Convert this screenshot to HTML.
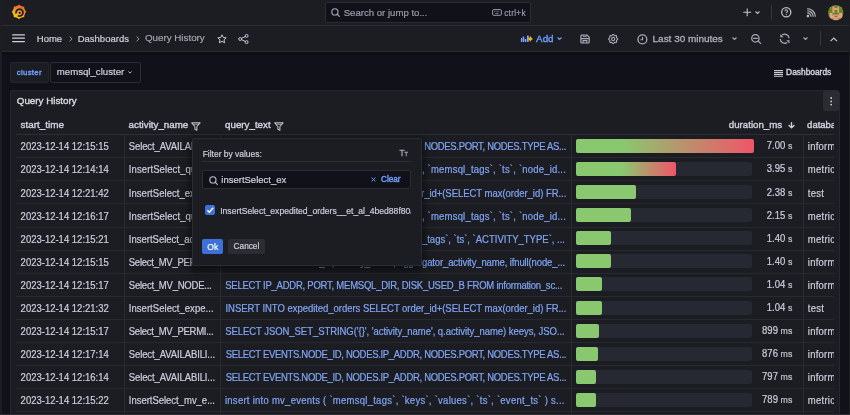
<!DOCTYPE html>
<html><head><meta charset="utf-8">
<style>
*{box-sizing:border-box;margin:0;padding:0}
html,body{-webkit-text-stroke:0.2px;width:850px;height:415px;overflow:hidden;background:#111219;-webkit-font-smoothing:antialiased;will-change:transform;font-family:"Liberation Sans",sans-serif;color:#ccccdc;font-size:9.5px}
.a{position:absolute}
.t{position:absolute;white-space:nowrap;line-height:1}
svg{position:absolute;overflow:visible}
#top{left:0;top:0;width:850px;height:26px;background:#1b1d22;border-bottom:1px solid #2a2d33}
#bc{left:0;top:26px;width:850px;height:26px;background:#1b1d22;border-bottom:1px solid #2a2c31}
.row{position:absolute;left:0;width:850px;height:23.1px}
.row span{position:absolute;top:0;line-height:23.1px;white-space:nowrap;transform:translateY(0.3px) scaleY(1.06);transform-origin:50% 50%}
.c1{left:20.6px;color:#ccccdc}
.c2{left:128.8px;color:#ccccdc}
.c3{color:#80a4f3}
.c5{left:807.8px;width:25.8px;overflow:hidden;color:#ccccdc;letter-spacing:0.25px}
.dur small{font-size:8.8px;color:#c0c0cc}
.dur{right:57.7px;color:#ccccdc}
.bg{position:absolute;left:575.7px;top:4.5px;width:176.4px;height:14px;background:#262931;border-radius:2px}
.bar{position:absolute;left:575.7px;top:4.5px;height:14px;background:#89c86f;border-radius:2px}
.hl{position:absolute;left:16px;width:817.6px;height:1px}
.vl{position:absolute;top:134.3px;width:1px;height:290px;background:#282a30}
</style></head>
<body>
<!-- left strip -->
<div class="a" style="left:848.8px;top:0;width:1.2px;height:415px;background:#1c1e23;z-index:5"></div>
<div class="a" style="left:0;top:413.5px;width:850px;height:1.5px;background:#2a2c31;z-index:6"></div>
<div class="a" style="left:0;top:0;width:2px;height:415px;background:#1c1e23;z-index:5"></div>

<!-- TOP BAR -->
<div id="top" class="a">
  <!-- grafana logo -->
  <svg style="left:11.3px;top:4.1px" width="16" height="16" viewBox="0 0 16 16">
    <defs><linearGradient id="lg" x1="0.75" y1="0" x2="0.25" y2="1"><stop offset="0" stop-color="#ec5e26"/><stop offset="0.45" stop-color="#f08a2a"/><stop offset="0.7" stop-color="#f6b41a"/><stop offset="1" stop-color="#fbd20a"/></linearGradient></defs>
    <path fill="url(#lg)" d="M15.20 7.85 L15.02 8.31 L14.59 8.72 L14.23 9.09 L14.13 9.49 L14.01 9.89 L13.87 10.28 L13.70 10.66 L13.50 11.02 L13.28 11.38 L13.28 11.90 L13.29 12.49 L13.09 12.94 L12.64 13.14 L12.05 13.13 L11.53 13.13 L11.18 13.35 L10.81 13.55 L10.43 13.72 L10.04 13.86 L9.64 13.98 L9.24 14.08 L8.87 14.44 L8.46 14.87 L8.00 15.05 L7.54 14.87 L7.13 14.44 L6.76 14.08 L6.36 13.98 L5.96 13.86 L5.57 13.72 L5.19 13.55 L4.83 13.35 L4.47 13.13 L3.95 13.13 L3.36 13.14 L2.91 12.94 L2.71 12.49 L2.72 11.90 L2.72 11.38 L2.50 11.02 L2.30 10.66 L2.13 10.28 L1.99 9.89 L1.87 9.49 L1.77 9.09 L1.41 8.72 L0.98 8.31 L0.80 7.85 L0.98 7.39 L1.41 6.98 L1.77 6.61 L1.87 6.21 L1.99 5.81 L2.13 5.42 L2.30 5.04 L2.50 4.68 L2.72 4.32 L2.72 3.80 L2.71 3.21 L2.91 2.76 L3.36 2.56 L3.95 2.57 L4.47 2.57 L4.82 2.35 L5.19 2.15 L5.57 1.98 L5.96 1.84 L6.36 1.72 L6.76 1.62 L7.13 1.26 L7.54 0.83 L8.00 0.65 L8.46 0.83 L8.87 1.26 L9.24 1.62 L9.64 1.72 L10.04 1.84 L10.43 1.98 L10.81 2.15 L11.18 2.35 L11.53 2.57 L12.05 2.57 L12.64 2.56 L13.09 2.76 L13.29 3.21 L13.28 3.80 L13.28 4.32 L13.50 4.67 L13.70 5.04 L13.87 5.42 L14.01 5.81 L14.13 6.21 L14.23 6.61 L14.59 6.98 L15.02 7.39Z"/>
    <path fill="none" stroke="#1a1c20" stroke-width="1.7" d="M5.12 9.51 A3.5 3.5 0 1 1 6.75 11.63"/>
    <circle cx="8.7" cy="8.8" r="1.15" fill="#1a1c20"/>
  </svg>
  <!-- search box -->
  <div class="a" style="left:325px;top:2px;width:206px;height:21px;background:#111219;border:1px solid #2a2d33;border-radius:2px"></div>
  <svg style="left:331px;top:8px" width="9" height="9" viewBox="0 0 9 9"><circle cx="3.9" cy="3.9" r="3.1" fill="none" stroke="#a9a9b8" stroke-width="1.1"/><path d="M6.2 6.2 L8.3 8.3" stroke="#a9a9b8" stroke-width="1.2" stroke-linecap="round"/></svg>
  <div class="t" style="left:343.7px;top:7.5px;color:#9a9aa8;font-size:9.6px">Search or jump to...</div>
  <svg style="left:491.6px;top:9.4px" width="10" height="7" viewBox="0 0 10 7"><rect x="0.6" y="0.6" width="8.8" height="5.7" rx="1.1" fill="none" stroke="#9a9aa8" stroke-width="1"/><path d="M2.2 2.4 H7.8" stroke="#8a8a98" stroke-width="0.8" stroke-dasharray="0.8 0.6"/><path d="M3.4 4.3 H6.6" stroke="#9a9aa8" stroke-width="0.8"/></svg>
  <div class="t" style="left:504.2px;top:9.6px;color:#9a9aa8;font-size:8.2px;letter-spacing:0.3px">ctrl+k</div>
  <!-- plus -->
  <svg style="left:742.6px;top:8px" width="9" height="9" viewBox="0 0 9 9"><path d="M4.2 0.4 V8.2 M0.3 4.3 H8.1" stroke="#c7c7d3" stroke-width="1.05"/></svg>
  <svg style="left:755.3px;top:11.2px" width="5" height="3" viewBox="0 0 5 3"><path d="M0.5 0.5 L2.5 2.5 L4.5 0.5" fill="none" stroke="#b8b8c4" stroke-width="1.1"/></svg>
  <div class="a" style="left:771px;top:5px;width:1px;height:15px;background:#34363c"></div>
  <!-- help -->
  <svg style="left:780.6px;top:6.7px" width="10.5" height="10.5" viewBox="0 0 10 10"><circle cx="5" cy="5" r="4.35" fill="none" stroke="#bdbdc9" stroke-width="1.25"/><path d="M3.8 4 A1.25 1.25 0 1 1 5.4 5.2 C5.05 5.4 5 5.6 5 6" fill="none" stroke="#a9a9b6" stroke-width="1.1"/><circle cx="5" cy="7.3" r="0.6" fill="#a9a9b6"/></svg>
  <!-- rss -->
  <svg style="left:806px;top:7.6px" width="10" height="10" viewBox="0 0 10 10"><circle cx="1.9" cy="8.1" r="1.3" fill="#bdbdc9"/><path d="M1.2 4.9 A3.9 3.9 0 0 1 5.1 8.8 M1.2 2.7 A6.1 6.1 0 0 1 7.3 8.8 M1.2 0.6 A8.2 8.2 0 0 1 9.4 8.8" fill="none" stroke="#b4b4c0" stroke-width="1.15"/></svg>
  <!-- avatar -->
  <svg style="left:827.5px;top:4.6px" width="15.6" height="15.6" viewBox="0 0 16 16">
    <defs><clipPath id="av"><circle cx="8" cy="8" r="7.9"/></clipPath></defs>
    <g clip-path="url(#av)"><rect width="16" height="16" fill="#5e8a1c"/>
    <g fill="#ee9a8c">
    <rect x="4.55" y="1.6" width="2.15" height="6.5"/><rect x="9.7" y="1.6" width="1.65" height="6.5"/><rect x="6.7" y="3.0" width="3" height="2.1"/>
    <rect x="1.5" y="8.1" width="3.05" height="5.2"/><rect x="11.35" y="8.1" width="3.25" height="5.2"/>
    <rect x="4.55" y="9.8" width="6.8" height="1.3"/>
    <rect x="2.9" y="11.1" width="10.1" height="2.7"/>
    <rect x="5.6" y="13.8" width="4.9" height="1.7"/>
    <rect x="1.5" y="2.4" width="1.4" height="1.1"/><rect x="13" y="2.4" width="1.4" height="1.1"/>
    </g>
    <rect x="6.7" y="11.1" width="3" height="1.3" fill="#5e8a1c"/></g>
  </svg>
</div>

<!-- BREADCRUMB BAR -->
<div id="bc" class="a">
  <svg style="left:11.7px;top:8.3px" width="14" height="9" viewBox="0 0 14 9"><path d="M0.7 0.9 H12.4 M0.7 4.2 H12.4 M0.7 7.6 H12.4" stroke="#d0d0dc" stroke-width="1.3" stroke-linecap="round"/></svg>
  <div class="t" style="left:36.8px;top:7.8px;color:#cfcfdb">Home</div>
  <svg style="left:68.5px;top:9.8px" width="4" height="6" viewBox="0 0 4 6"><path d="M0.6 0.5 L3 2.9 L0.6 5.3" fill="none" stroke="#a9a9b6" stroke-width="0.9"/></svg>
  <div class="t" style="left:77.7px;top:7.8px;color:#cfcfdb">Dashboards</div>
  <svg style="left:136px;top:9.8px" width="4" height="6" viewBox="0 0 4 6"><path d="M0.6 0.5 L3 2.9 L0.6 5.3" fill="none" stroke="#a9a9b6" stroke-width="0.9"/></svg>
  <div class="t" style="left:144.9px;top:7px;color:#a3a3b0;font-size:9.8px">Query History</div>
  <!-- star -->
  <svg style="left:216.8px;top:8.3px" width="10" height="10" viewBox="0 0 10 10"><path d="M5 0.8 L6.25 3.5 L9.2 3.8 L7 5.8 L7.6 8.8 L5 7.3 L2.4 8.8 L3 5.8 L0.8 3.8 L3.75 3.5 Z" fill="none" stroke="#cfcfdb" stroke-width="0.95" stroke-linejoin="round"/></svg>
  <!-- share -->
  <svg style="left:238.2px;top:8px" width="11" height="10" viewBox="0 0 11 10"><circle cx="8.6" cy="1.9" r="1.45" fill="none" stroke="#cfcfdb" stroke-width="0.95"/><circle cx="2.2" cy="5" r="1.45" fill="none" stroke="#cfcfdb" stroke-width="0.95"/><circle cx="8.6" cy="8.1" r="1.45" fill="none" stroke="#cfcfdb" stroke-width="0.95"/><path d="M3.5 4.3 L7.3 2.6 M3.5 5.7 L7.3 7.4" stroke="#cfcfdb" stroke-width="0.95"/></svg>

  <!-- add icon -->
  <svg style="left:520px;top:9px" width="15" height="8" viewBox="0 0 15 8"><g fill="#7ea6ff"><rect x="0.9" y="2.9" width="1.4" height="4" rx="0.3"/><rect x="2.7" y="1.4" width="1.5" height="5.5" rx="0.3"/><rect x="4.7" y="4.1" width="1.6" height="2.8" rx="0.3"/><rect x="6.9" y="0.4" width="1.9" height="6.5" rx="0.4"/></g><path fill="#f5b800" d="M10.4 1.1 Q11.1 3.2 13 3.9 Q11.1 4.6 10.4 6.8 Q9.7 4.6 7.8 3.9 Q9.7 3.2 10.4 1.1Z"/></svg>
  <div class="t" style="left:536.1px;top:7.6px;color:#6e9fff;font-size:9.8px;-webkit-text-stroke:0.35px">Add</div>
  <svg style="left:557.2px;top:11.2px" width="5" height="3" viewBox="0 0 5 3"><path d="M0.5 0.5 L2.5 2.5 L4.5 0.5" fill="none" stroke="#6e9fff" stroke-width="1.1"/></svg>
  <!-- save -->
  <svg style="left:580px;top:7.6px" width="10" height="10" viewBox="0 0 10 10"><path d="M1.9 1 H7 L9.2 3.2 V8 Q9.2 9 8.2 9 H1.9 Q0.9 9 0.9 8 V2 Q0.9 1 1.9 1 Z" fill="none" stroke="#a9a9b6" stroke-width="1.2"/><path d="M1 4.6 H9.1 M3.1 9 V6.6 H6.9 V9" fill="none" stroke="#a9a9b6" stroke-width="1.1"/><path d="M3.2 1 V2.6 H6.4 V1" fill="none" stroke="#a9a9b6" stroke-width="0.9"/></svg>
  <!-- gear -->
  <svg style="left:607.9px;top:33.9px;top:7.9px" width="10.4" height="10" viewBox="0 0 10.4 10"><path d="M9.80 5.00 L9.63 5.44 L9.22 5.80 L8.79 6.09 L8.53 6.38 L8.50 6.77 L8.61 7.28 L8.64 7.83 L8.45 8.25 L8.03 8.44 L7.48 8.41 L6.97 8.30 L6.58 8.33 L6.29 8.59 L6.00 9.02 L5.64 9.43 L5.20 9.60 L4.76 9.43 L4.40 9.02 L4.11 8.59 L3.82 8.33 L3.43 8.30 L2.92 8.41 L2.37 8.44 L1.95 8.25 L1.76 7.83 L1.79 7.28 L1.90 6.77 L1.87 6.38 L1.61 6.09 L1.18 5.80 L0.77 5.44 L0.60 5.00 L0.77 4.56 L1.18 4.20 L1.61 3.91 L1.87 3.62 L1.90 3.23 L1.79 2.72 L1.76 2.17 L1.95 1.75 L2.37 1.56 L2.92 1.59 L3.43 1.70 L3.82 1.67 L4.11 1.41 L4.40 0.98 L4.76 0.57 L5.20 0.40 L5.64 0.57 L6.00 0.98 L6.29 1.41 L6.58 1.67 L6.97 1.70 L7.48 1.59 L8.03 1.56 L8.45 1.75 L8.64 2.17 L8.61 2.72 L8.50 3.23 L8.53 3.62 L8.79 3.91 L9.22 4.20 L9.63 4.56Z" fill="none" stroke="#a9a9b6" stroke-width="1.1" stroke-linejoin="round"/><circle cx="5.2" cy="5" r="1.6" fill="none" stroke="#a9a9b6" stroke-width="1.1"/></svg>
  <!-- clock -->
  <svg style="left:636.5px;top:7.5px" width="11" height="11" viewBox="0 0 11 11"><circle cx="5.4" cy="5.4" r="4.45" fill="none" stroke="#a9a9b6" stroke-width="1.3"/><path d="M5.5 3 V5.7 H3.4" fill="none" stroke="#a9a9b6" stroke-width="1.15"/></svg>
  <div class="t" style="left:652.6px;top:7.7px;color:#b0b0bc;font-size:9.95px;-webkit-text-stroke:0.3px">Last 30 minutes</div>
  <svg style="left:732.3px;top:11.2px" width="5" height="3" viewBox="0 0 5 3"><path d="M0.5 0.5 L2.5 2.5 L4.5 0.5" fill="none" stroke="#a9a9b6" stroke-width="1.1"/></svg>
  <!-- zoom out -->
  <svg style="left:751px;top:8.2px" width="11" height="10" viewBox="0 0 11 10"><circle cx="4.4" cy="4.3" r="3.7" fill="none" stroke="#a9a9b6" stroke-width="1.25"/><path d="M2.5 4.3 H6.3 M7.1 7 L9.6 9.4" stroke="#a9a9b6" stroke-width="1.25" stroke-linecap="round"/></svg>
  <!-- refresh -->
  <svg style="left:779.1px;top:7.4px" width="12" height="12" viewBox="0 0 12 12"><path d="M3.12 2.01 A4.5 4.5 0 0 1 10.18 5.31 M8.28 9.39 A4.5 4.5 0 0 1 1.22 6.09" fill="none" stroke="#a9a9b6" stroke-width="1.25"/><path d="M1.3 1.0 L1.3 4.3 L4.5 4.3 Z M10.5 10.6 L10.5 7.3 L7.3 7.3 Z" fill="#a9a9b6"/></svg>
  <svg style="left:803.4px;top:11px" width="5" height="3" viewBox="0 0 5 3"><path d="M0.5 0.5 L2.5 2.5 L4.5 0.5" fill="none" stroke="#a9a9b6" stroke-width="1.1"/></svg>
  <div class="a" style="left:820.3px;top:4.5px;width:1px;height:15.5px;background:#34363c"></div>
  <svg style="left:830.2px;top:11.3px" width="8" height="5" viewBox="0 0 8 5"><path d="M0.6 4.2 L3.8 1 L7 4.2" fill="none" stroke="#c7c7d3" stroke-width="1.1"/></svg>
</div>

<div class="a" style="left:0;top:52px;width:850px;height:2.5px;background:linear-gradient(#0a0b0f,rgba(10,11,15,0))"></div>
<!-- VARIABLES -->
<div class="a" style="left:10.2px;top:61.8px;width:38.4px;height:20.8px;background:#1b1d22;border:1px solid #24262b;border-radius:2px"></div>
<div class="t" style="left:16.8px;top:69.2px;color:#6e9fff;font-size:7.8px;letter-spacing:0.3px;-webkit-text-stroke:0.4px">cluster</div>
<div class="a" style="left:50.4px;top:61.8px;width:90.2px;height:20.8px;background:#111219;border:1px solid #2a2d33;border-radius:2px"></div>
<div class="t" style="left:56.8px;top:67.4px;color:#cfcfdb;font-size:9.65px">memsql_cluster</div>
<svg style="left:128.4px;top:71.2px" width="4" height="3" viewBox="0 0 4 3"><path d="M0.4 0.5 L2 2.1 L3.6 0.5" fill="none" stroke="#cfcfdb" stroke-width="0.9"/></svg>

<svg style="left:773.8px;top:69.6px" width="9" height="7" viewBox="0 0 9 7"><path d="M0 0.6 H9 M0 2.5 H9 M0 4.4 H9 M0 6.3 H9" stroke="#c7c7d3" stroke-width="1.1"/></svg>
<div class="t" style="left:786.1px;top:68px;color:#d0d0dc;font-size:8.4px;-webkit-text-stroke:0.4px">Dashboards</div>

<!-- PANEL -->
<div class="a" style="left:10px;top:90px;width:830px;height:330px;background:#1b1d22;border:1px solid #26282d;border-radius:3px"></div>
<div class="t" style="-webkit-text-stroke:0.4px;left:16.8px;top:96.3px;color:#d8d8e2;font-size:9.8px">Query History</div>
<div class="a" style="left:823.4px;top:91px;width:15.5px;height:19.6px;background:#2a2c31;border-radius:2px"></div>
<svg style="left:829.8px;top:96.6px" width="2.4" height="9" viewBox="0 0 2.4 9"><circle cx="1.2" cy="1" r="0.9" fill="#cfcfdb"/><circle cx="1.2" cy="4.4" r="0.9" fill="#cfcfdb"/><circle cx="1.2" cy="7.6" r="0.9" fill="#cfcfdb"/></svg>

<!-- TABLE HEADER -->
<div class="a" style="left:16px;top:133.8px;width:818px;height:1px;background:#2a2d33"></div>
<div class="t" style="-webkit-text-stroke:0.4px;left:20.6px;top:120.1px;color:#d0d0dc;font-size:9.9px">start_time</div>
<div class="t" style="-webkit-text-stroke:0.4px;left:128.6px;top:120.1px;color:#d0d0dc;font-size:9.75px">activity_name</div>
<svg style="left:191.4px;top:122.3px" width="10" height="9" viewBox="0 0 10 9"><path d="M0.7 0.8 H9.1 L5.9 4.5 V8.3 L3.9 7.2 V4.5 Z" fill="none" stroke="#c0c0cc" stroke-width="1.05" stroke-linejoin="round"/><path d="M1.9 2.2 H7.9" stroke="#c0c0cc" stroke-width="0.9"/></svg>
<div class="t" style="-webkit-text-stroke:0.4px;left:225.1px;top:120.1px;color:#d0d0dc;font-size:9.75px">query_text</div>
<svg style="left:274.2px;top:122.3px" width="10" height="9" viewBox="0 0 10 9"><path d="M0.7 0.8 H9.1 L5.9 4.5 V8.3 L3.9 7.2 V4.5 Z" fill="none" stroke="#c0c0cc" stroke-width="1.05" stroke-linejoin="round"/><path d="M1.9 2.2 H7.9" stroke="#c0c0cc" stroke-width="0.9"/></svg>
<div class="t" style="-webkit-text-stroke:0.4px;left:728.8px;top:120.2px;color:#d0d0dc;font-size:9.7px">duration_ms</div>
<svg style="left:787.6px;top:121.8px" width="7" height="7" viewBox="0 0 7 7"><path d="M3.5 0.6 V5.6 M1.0 3.4 L3.5 5.8 L6.0 3.4" fill="none" stroke="#d0d0dc" stroke-width="1.4" stroke-linecap="round" stroke-linejoin="round"/></svg>
<div class="t" style="-webkit-text-stroke:0.4px;left:807.1px;top:120.4px;color:#d0d0dc;width:26.5px;overflow:hidden">database</div>

<div id="rows">
<div class="hl" style="top:134.10px;background:#2c2f35"></div>
<div class="hl" style="top:157.20px;background:#282a30"></div>
<div class="hl" style="top:180.30px;background:#282a30"></div>
<div class="hl" style="top:203.40px;background:#282a30"></div>
<div class="hl" style="top:226.50px;background:#282a30"></div>
<div class="hl" style="top:249.60px;background:#282a30"></div>
<div class="hl" style="top:272.70px;background:#282a30"></div>
<div class="hl" style="top:295.80px;background:#282a30"></div>
<div class="hl" style="top:318.90px;background:#282a30"></div>
<div class="hl" style="top:342.00px;background:#282a30"></div>
<div class="hl" style="top:365.10px;background:#282a30"></div>
<div class="hl" style="top:388.20px;background:#282a30"></div>
<div class="hl" style="top:411.30px;background:#282a30"></div>
<div class="vl" style="left:123.70px"></div>
<div class="vl" style="left:220.10px"></div>
<div class="vl" style="left:571.30px"></div>
<div class="vl" style="left:802.80px"></div>
<div class="row" style="top:134.30px"><span class="c1">2023-12-14 12:15:15</span><span class="c2" style="letter-spacing:-0.11px">Select_AVAILABILI...</span><span class="c3" style="right:284.00px;letter-spacing:-0.320px">SELECT EVENTS.NODE_ID, NODES.IP_ADDR, NODES.PORT, NODES.TYPE AS...</span><div class="bg"></div><div class="bar" style="width:178.60px;background:linear-gradient(90deg,#89c86f,#89c86f 46px,#f05569)"></div><span class="dur">7.00 <small>s</small></span><span class="c5">inform</span></div>
<div class="row" style="top:157.40px"><span class="c1">2023-12-14 12:14:14</span><span class="c2" style="letter-spacing:0.1px">InsertSelect_qu...</span><span class="c3" style="right:284.00px;letter-spacing:0.200px">insert into mv_activities ( `name`, `memsql_tags`, `ts`, `node_id...</span><div class="bg"></div><div class="bar" style="width:100.78px;background:linear-gradient(90deg,#89c86f,#89c86f 46px,#f05569)"></div><span class="dur">3.95 <small>s</small></span><span class="c5">metric</span></div>
<div class="row" style="top:180.50px"><span class="c1">2023-12-14 12:21:42</span><span class="c2" style="letter-spacing:0.04px">InsertSelect_expe...</span><span class="c3" style="right:283.70px;letter-spacing:-0.032px">INSERT INTO expedited_orders SELECT order_id+(SELECT max(order_id) FR...</span><div class="bg"></div><div class="bar" style="width:60.72px;"></div><span class="dur">2.38 <small>s</small></span><span class="c5">test</span></div>
<div class="row" style="top:203.60px"><span class="c1">2023-12-14 12:16:17</span><span class="c2" style="letter-spacing:0.1px">InsertSelect_qu...</span><span class="c3" style="right:284.00px;letter-spacing:0.200px">insert into mv_activities ( `name`, `memsql_tags`, `ts`, `node_id...</span><div class="bg"></div><div class="bar" style="width:54.86px;"></div><span class="dur">2.15 <small>s</small></span><span class="c5">metric</span></div>
<div class="row" style="top:226.70px"><span class="c1">2023-12-14 12:15:21</span><span class="c2" style="letter-spacing:0px">InsertSelect_ac...</span><span class="c3" style="right:285.00px;letter-spacing:0.000px">insert into mv_activities_cumulative ( `memsql_tags`, `ts`, `ACTIVITY_TYPE`, ...</span><div class="bg"></div><div class="bar" style="width:35.72px;"></div><span class="dur">1.40 <small>s</small></span><span class="c5">metric</span></div>
<div class="row" style="top:249.80px"><span class="c1">2023-12-14 12:15:15</span><span class="c2" style="letter-spacing:-0.26px">Select_MV_PERMI...</span><span class="c3" style="right:285.00px;letter-spacing:-0.120px">SELECT node_id, activity_name, aggregator_activity_name, ifnull(node_...</span><div class="bg"></div><div class="bar" style="width:35.72px;"></div><span class="dur">1.40 <small>s</small></span><span class="c5">inform</span></div>
<div class="row" style="top:272.90px"><span class="c1">2023-12-14 12:15:17</span><span class="c2" style="letter-spacing:-0.23px">Select_MV_NODE...</span><span class="c3" style="right:287.90px;letter-spacing:-0.234px">SELECT IP_ADDR, PORT, MEMSQL_DIR, DISK_USED_B FROM information_sc...</span><div class="bg"></div><div class="bar" style="width:26.53px;"></div><span class="dur">1.04 <small>s</small></span><span class="c5">inform</span></div>
<div class="row" style="top:296.00px"><span class="c1">2023-12-14 12:21:32</span><span class="c2" style="letter-spacing:0.04px">InsertSelect_expe...</span><span class="c3" style="right:283.70px;letter-spacing:-0.032px">INSERT INTO expedited_orders SELECT order_id+(SELECT max(order_id) FR...</span><div class="bg"></div><div class="bar" style="width:26.53px;"></div><span class="dur">1.04 <small>s</small></span><span class="c5">test</span></div>
<div class="row" style="top:319.10px"><span class="c1">2023-12-14 12:15:17</span><span class="c2" style="letter-spacing:-0.26px">Select_MV_PERMI...</span><span class="c3" style="right:285.40px;letter-spacing:-0.052px">SELECT JSON_SET_STRING(&#x27;{}&#x27;, &#x27;activity_name&#x27;, q.activity_name) keeys, JSO...</span><div class="bg"></div><div class="bar" style="width:22.94px;"></div><span class="dur">899 <small>ms</small></span><span class="c5">inform</span></div>
<div class="row" style="top:342.20px"><span class="c1">2023-12-14 12:17:14</span><span class="c2" style="letter-spacing:-0.11px">Select_AVAILABILI...</span><span class="c3" style="right:283.90px;letter-spacing:-0.316px">SELECT EVENTS.NODE_ID, NODES.IP_ADDR, NODES.PORT, NODES.TYPE AS...</span><div class="bg"></div><div class="bar" style="width:22.35px;"></div><span class="dur">876 <small>ms</small></span><span class="c5">inform</span></div>
<div class="row" style="top:365.30px"><span class="c1">2023-12-14 12:16:14</span><span class="c2" style="letter-spacing:-0.11px">Select_AVAILABILI...</span><span class="c3" style="right:283.90px;letter-spacing:-0.316px">SELECT EVENTS.NODE_ID, NODES.IP_ADDR, NODES.PORT, NODES.TYPE AS...</span><div class="bg"></div><div class="bar" style="width:20.33px;"></div><span class="dur">797 <small>ms</small></span><span class="c5">inform</span></div>
<div class="row" style="top:388.40px"><span class="c1">2023-12-14 12:15:22</span><span class="c2" style="letter-spacing:-0.02px">InsertSelect_mv_e...</span><span class="c3" style="right:285.30px;letter-spacing:0.261px">insert into mv_events ( `memsql_tags`, `keys`, `values`, `ts`, `event_ts` ) s...</span><div class="bg"></div><div class="bar" style="width:20.13px;"></div><span class="dur">789 <small>ms</small></span><span class="c5">metric</span></div>
</div><!--/rows-->
<div id="pop">
<div class="a" style="left:191.7px;top:138px;width:230px;height:127.8px;background:#1b1d22;border:1px solid #2a2c32;border-radius:2px;box-shadow:0 3px 10px 2px rgba(0,0,0,0.55)"></div>
<div class="t" style="left:202.7px;top:150.2px;color:#ccccdc;font-size:8.45px">Filter by values:</div>
<div class="t" style="left:399.4px;top:150.2px;color:#a4a4b0;font-size:8.2px;-webkit-text-stroke:0.3px">T<span style="font-size:5.6px">T</span></div>
<div class="a" style="left:202.3px;top:160.8px;width:208.7px;height:1px;background:#2c2e34"></div>
<div class="a" style="left:202.3px;top:169.8px;width:208.6px;height:19.6px;background:#111219;border:1px solid #2a2d33;border-radius:2px"></div>
<svg style="left:208.6px;top:176.2px" width="9" height="9" viewBox="0 0 9 9"><circle cx="3.9" cy="3.9" r="3.1" fill="none" stroke="#c0c0cc" stroke-width="1.1"/><path d="M6.2 6.2 L8.3 8.3" stroke="#c0c0cc" stroke-width="1.2" stroke-linecap="round"/></svg>
<div class="t" style="left:221.3px;top:174.6px;color:#d0d0dc">insertSelect_ex</div>
<svg style="left:371.2px;top:177.4px" width="5" height="5" viewBox="0 0 5 5"><path d="M0.6 0.6 L4.4 4.4 M4.4 0.6 L0.6 4.4" stroke="#6e9fff" stroke-width="1"/></svg>
<div class="t" style="left:381px;top:175.8px;color:#6e9fff;font-size:8.2px;-webkit-text-stroke:0.4px">Clear</div>
<div class="a" style="left:204.9px;top:205.3px;width:10.3px;height:10.1px;background:#3d71d9;border-radius:2px"></div>
<svg style="left:204.9px;top:205.3px" width="10.3" height="10.1" viewBox="0 0 10 10"><path d="M2.2 5.2 L4.2 7.2 L8 2.8" fill="none" stroke="#fff" stroke-width="1.4"/></svg>
<div class="t" style="left:220.2px;top:205.6px;width:190.5px;overflow:hidden;color:#ccccdc;font-size:8.6px;line-height:1.3">InsertSelect_expedited_orders__et_al_4bed88f80a</div>
<div class="a" style="left:202.2px;top:238.9px;width:20.8px;height:15.4px;background:#3d71d9;border-radius:2px"></div>
<div class="t" style="left:207.3px;top:243px;color:#ffffff;font-size:8.5px">Ok</div>
<div class="a" style="left:228px;top:238.9px;width:36.9px;height:15.4px;background:#2b2d32;border-radius:2px"></div>
<div class="t" style="left:233.6px;top:243.4px;color:#ccccdc;font-size:8.25px">Cancel</div>
</div>

</body></html>
